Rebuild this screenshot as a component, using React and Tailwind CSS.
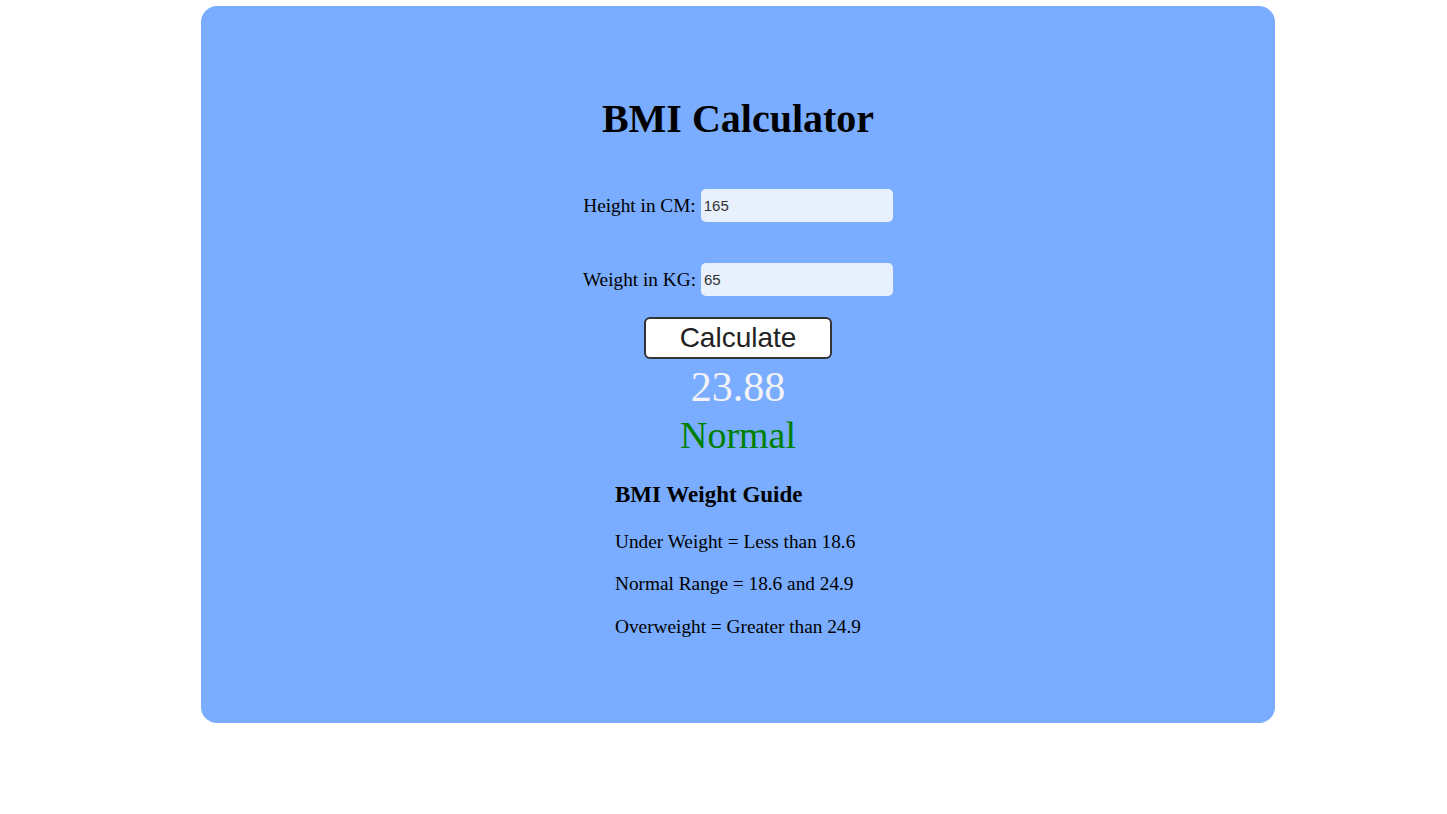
export default function App() {
  const guide = [
    { text: "Under Weight = Less than 18.6", gap: "mt-[21px]" },
    { text: "Normal Range = 18.6 and 24.9", gap: "mt-[18px]" },
    { text: "Overweight = Greater than 24.9", gap: "mt-[19px]" },
  ];

  return (
    <div className="min-h-[814px] bg-white pt-[6px] font-['Liberation_Serif','Times_New_Roman',serif] text-black">
      <div className="ml-[201px] flex w-[1074px] flex-col items-center rounded-[16px] bg-[#7aadff] pt-[89px] pb-[84px]">
        <h1 className="text-[40px] font-bold leading-[48px]">BMI Calculator</h1>

        <div className="mt-[46px] flex items-center gap-[5px]">
          <label className="text-[19.3px] leading-[22px]">Height in CM:</label>
          <input
            readOnly
            value="165"
            className="h-[33px] w-[192px] rounded-[5px] bg-[#e8f0fe] px-[3px] font-['Liberation_Sans',Arial,sans-serif] text-[15px] text-[#333] outline-none"
          />
        </div>

        <div className="mt-[41px] flex items-center gap-[5px]">
          <label className="text-[19.3px] leading-[22px]">Weight in KG:</label>
          <input
            readOnly
            value="65"
            className="h-[33px] w-[192px] rounded-[5px] bg-[#e8f0fe] px-[3px] font-['Liberation_Sans',Arial,sans-serif] text-[15px] text-[#333] outline-none"
          />
        </div>

        <button
          type="button"
          className="mt-[21px] flex h-[42px] w-[188px] items-center justify-center rounded-[6px] border-2 border-[#333] bg-white font-['Liberation_Sans',Arial,sans-serif] text-[28px] leading-none text-[#222]"
        >
          Calculate
        </button>

        <p className="mt-[4px] text-[42px] leading-[48px] text-[#f2f2f7]">23.88</p>
        <p className="mt-[2px] text-[38px] leading-[44px] text-[#008000]">Normal</p>

        <div className="mt-[24px] text-left">
          <h3 className="text-[23px] font-bold leading-[28px]">BMI Weight Guide</h3>
          {guide.map((line) => (
            <p key={line.text} className={`${line.gap} text-[19.3px] leading-[24px]`}>
              {line.text}
            </p>
          ))}
        </div>
      </div>
    </div>
  );
}
